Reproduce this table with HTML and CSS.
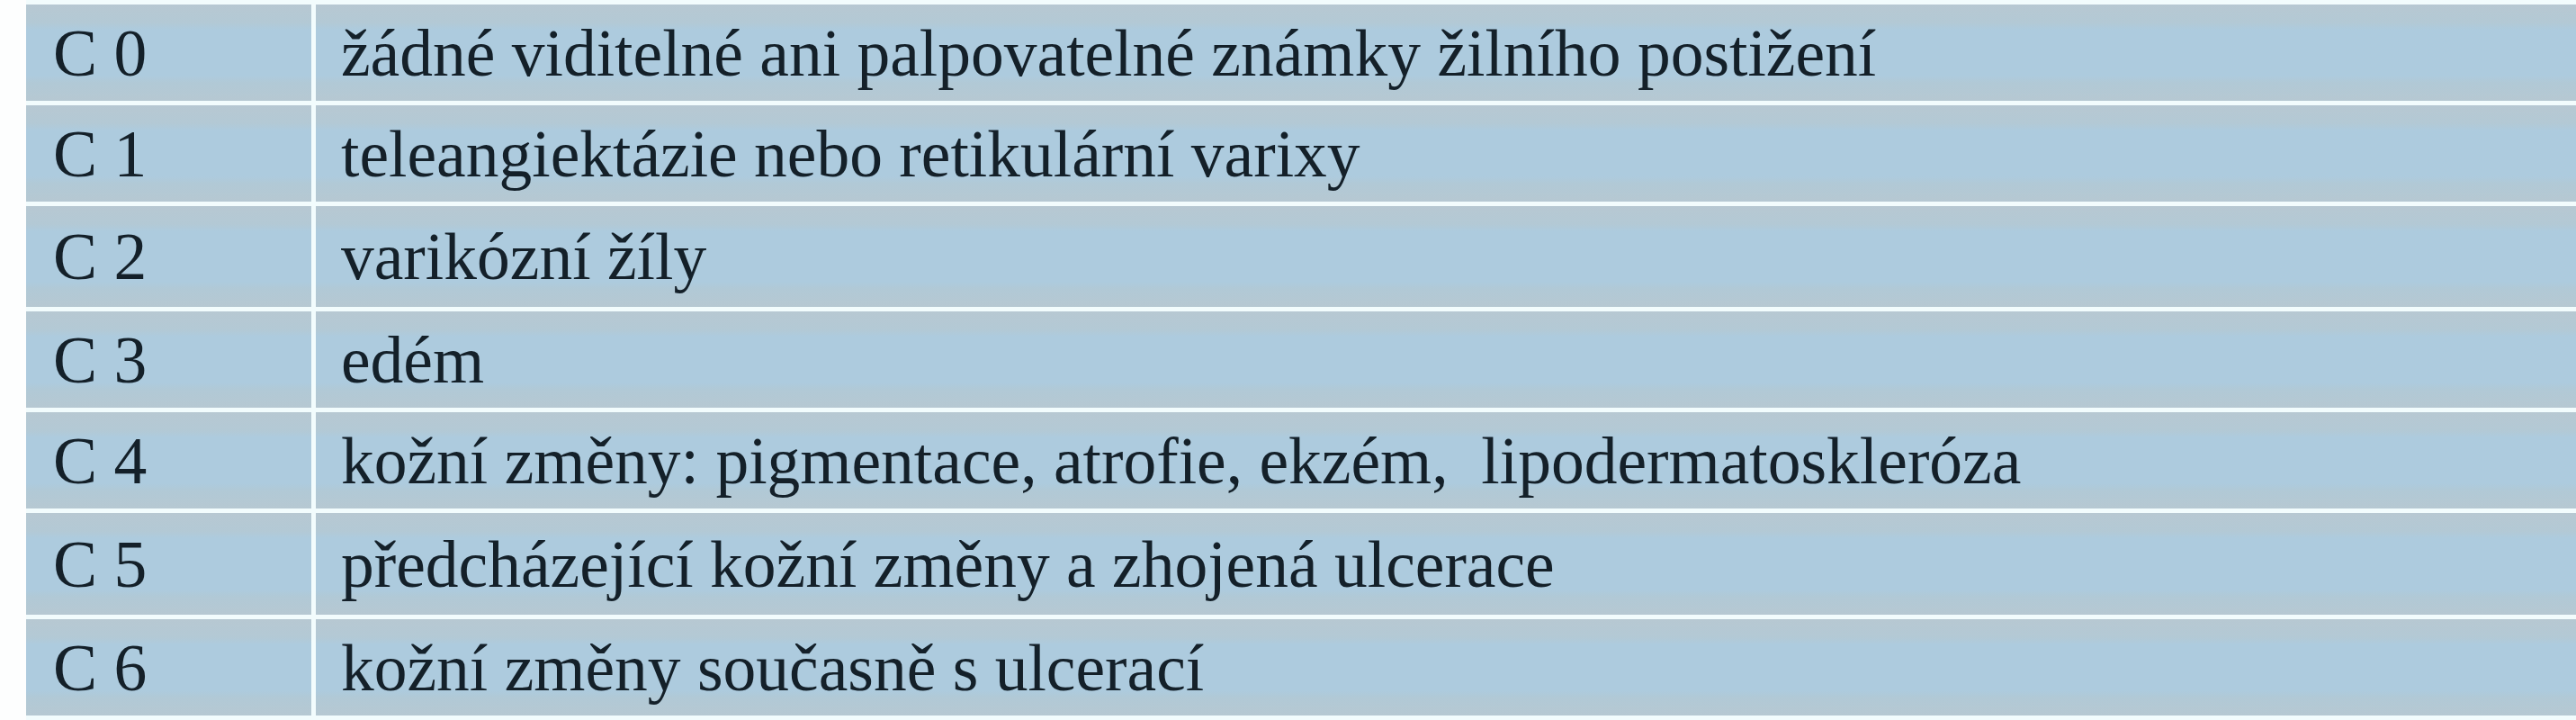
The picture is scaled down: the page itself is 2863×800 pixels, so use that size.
FILE: index.html
```html
<!DOCTYPE html>
<html lang="cs">
<head>
<meta charset="utf-8">
<title>CEAP klasifikace</title>
<link rel="stylesheet" href="styles.css">
</head>
<body>
<div class="ceap">
  <div class="cell code">C 0</div><div class="cell desc">žádné viditelné ani palpovatelné známky žilního postižení</div>
  <div class="cell code">C 1</div><div class="cell desc">teleangiektázie nebo retikulární varixy</div>
  <div class="cell code">C 2</div><div class="cell desc">varikózní žíly</div>
  <div class="cell code">C 3</div><div class="cell desc">edém</div>
  <div class="cell code">C 4</div><div class="cell desc">kožní změny: pigmentace, atrofie, ekzém,&nbsp; lipodermatoskleróza</div>
  <div class="cell code">C 5</div><div class="cell desc">předcházející kožní změny a zhojená ulcerace</div>
  <div class="cell code">C 6</div><div class="cell desc">kožní změny současně s ulcerací</div>
</div>
</body>
</html>
```

FILE: styles.css
```css
html, body {
  margin: 0;
  padding: 0;
  background: #fdfefe;
}

.ceap {
  display: grid;
  grid-template-columns: 317px 1fr;
  grid-template-rows: 107px 107px 112px 107px 107px 113px 107px;
  gap: 5px;
  margin-left: 29px;
  padding: 5px 0;
  height: 800px;
  box-sizing: border-box;
  background: #f2fcfd;
  font-family: "Liberation Serif", "Times New Roman", serif;
  font-size: 73.5px;
  line-height: 1;
  color: #142029;
}

.cell {
  display: flex;
  align-items: center;
  padding-left: 30px;
  padding-top: 2px;
  white-space: nowrap;
  background: linear-gradient(to bottom,
    #b7c8d2 0px,
    #b3c9d5 20px,
    #adcbde 28px,
    #adcbde calc(100% - 28px),
    #b1c9d6 calc(100% - 20px),
    #b6c8d2 100%);
}

.desc {
  padding-left: 28px;
}
```
